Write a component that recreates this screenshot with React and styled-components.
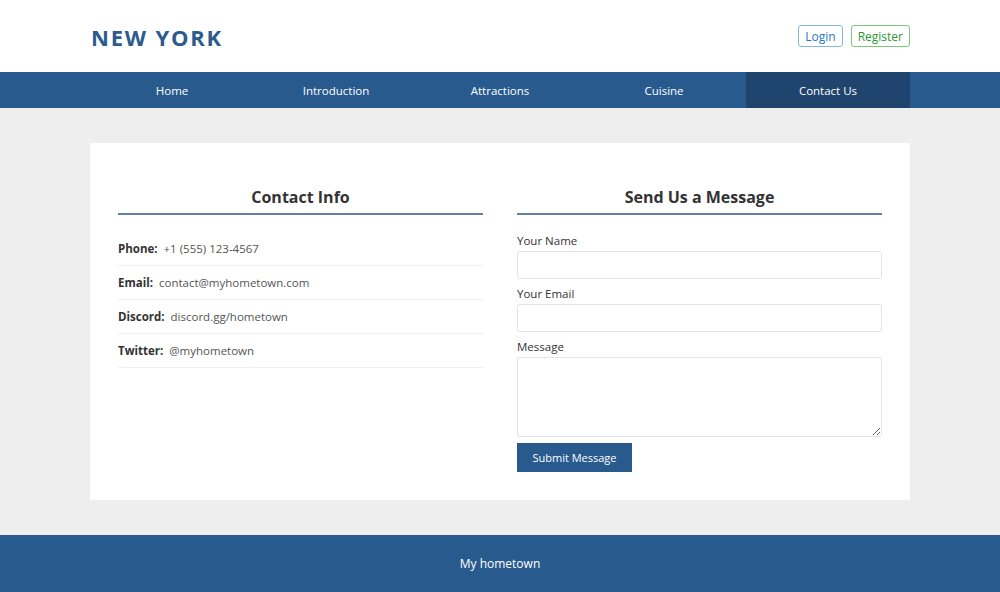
import React from 'react';
import styled, { createGlobalStyle } from 'styled-components';

const GlobalStyle = createGlobalStyle`
  html, body {
    margin: 0;
    padding: 0;
    background: #eeeeee;
    font-family: 'Open Sans', 'Noto Sans', sans-serif;
    color: #333;
  }
  * {
    box-sizing: border-box;
  }
`;

const Page = styled.div`
  display: flex;
  flex-direction: column;
  min-height: 592px;
`;

const Header = styled.header`
  background: #fff;
  height: 72px;
`;

const Container = styled.div`
  width: 820px;
  margin: 0 auto;
`;

const HeaderInner = styled(Container)`
  height: 100%;
  display: flex;
  align-items: center;
  justify-content: space-between;
`;

const Brand = styled.h1`
  margin: 1px 0 0 1px;
  font-size: 22px;
  font-weight: 700;
  letter-spacing: 1.8px;
  color: #2b5b8f;
`;

const AuthLinks = styled.div`
  display: flex;
  gap: 8px;
`;

const AuthButton = styled.a`
  display: inline-flex;
  align-items: center;
  justify-content: center;
  height: 22px;
  padding: 0 6px;
  border: 1px solid ${(p) => (p.$variant === 'green' ? '#78c878' : '#86b7e2')};
  border-radius: 3px;
  color: ${(p) => (p.$variant === 'green' ? '#2a9a34' : '#2479c2')};
  font-size: 12px;
  text-decoration: none;
  cursor: pointer;
`;

const Nav = styled.nav`
  background: #285a8e;
  height: 36px;
`;

const NavList = styled(Container)`
  display: grid;
  grid-template-columns: repeat(5, 1fr);
  height: 100%;
`;

const NavItem = styled.a`
  display: flex;
  align-items: center;
  justify-content: center;
  color: #fff;
  font-size: 11.5px;
  text-decoration: none;
  background: ${(p) => (p.$active ? '#1f446d' : 'transparent')};
`;

const Main = styled.main`
  flex: 1;
  padding: 35px 0;
`;

const Card = styled(Container)`
  background: #fff;
  padding: 42px 28px 28px;
  display: grid;
  grid-template-columns: 1fr 1fr;
  column-gap: 34px;
`;

const Column = styled.section``;

const SectionTitle = styled.h2`
  margin: 0 0 17px;
  padding-bottom: 4px;
  border-bottom: 2px solid #5f81a5;
  font-size: 16px;
  line-height: 24px;
  font-weight: 700;
  text-align: center;
  color: #333;
`;

const InfoRow = styled.div`
  height: 34px;
  display: flex;
  align-items: center;
  gap: 6px;
  border-bottom: 1px solid #f0f0f0;
  font-size: 11.5px;
  color: #555;
`;

const InfoLabel = styled.strong`
  color: #333;
  font-weight: 700;
`;

const Form = styled.form`
  display: flex;
  flex-direction: column;
  gap: 6px;
`;

const Field = styled.div`
  display: flex;
  flex-direction: column;
  gap: 2px;
`;

const Label = styled.label`
  font-size: 11.5px;
  line-height: 17px;
  color: #333;
`;

const Input = styled.input`
  height: 28px;
  border: 1px solid #e4e4e4;
  border-radius: 2px;
  padding: 4px 8px;
  font: inherit;
  outline: none;
`;

const TextArea = styled.textarea`
  height: 80px;
  border: 1px solid #e4e4e4;
  border-radius: 2px;
  padding: 4px 8px;
  font: inherit;
  outline: none;
  resize: vertical;
`;

const SubmitButton = styled.button`
  align-self: flex-start;
  height: 29px;
  width: 115px;
  border: none;
  background: #285a8e;
  color: #fff;
  font-family: inherit;
  font-size: 11px;
  cursor: pointer;
`;

const Footer = styled.footer`
  background: #285a8e;
  height: 57px;
  display: flex;
  align-items: center;
  justify-content: center;
  color: #fff;
  font-size: 12px;
`;

const navLinks = ['Home', 'Introduction', 'Attractions', 'Cuisine', 'Contact Us'];

const contacts = [
  { label: 'Phone:', value: '+1 (555) 123-4567' },
  { label: 'Email:', value: 'contact@myhometown.com' },
  { label: 'Discord:', value: 'discord.gg/hometown' },
  { label: 'Twitter:', value: '@myhometown' },
];

const App = () => {
  return (
    <Page>
      <GlobalStyle />
      <Header>
        <HeaderInner>
          <Brand>NEW YORK</Brand>
          <AuthLinks>
            <AuthButton>Login</AuthButton>
            <AuthButton $variant="green">Register</AuthButton>
          </AuthLinks>
        </HeaderInner>
      </Header>
      <Nav>
        <NavList>
          {navLinks.map((link) => (
            <NavItem key={link} $active={link === 'Contact Us'}>
              {link}
            </NavItem>
          ))}
        </NavList>
      </Nav>
      <Main>
        <Card>
          <Column>
            <SectionTitle>Contact Info</SectionTitle>
            {contacts.map((c) => (
              <InfoRow key={c.label}>
                <InfoLabel>{c.label}</InfoLabel>
                <span>{c.value}</span>
              </InfoRow>
            ))}
          </Column>
          <Column>
            <SectionTitle>Send Us a Message</SectionTitle>
            <Form onSubmit={(e) => e.preventDefault()}>
              <Field>
                <Label>Your Name</Label>
                <Input type="text" />
              </Field>
              <Field>
                <Label>Your Email</Label>
                <Input type="email" />
              </Field>
              <Field>
                <Label>Message</Label>
                <TextArea />
              </Field>
              <SubmitButton type="submit">Submit Message</SubmitButton>
            </Form>
          </Column>
        </Card>
      </Main>
      <Footer>My hometown</Footer>
    </Page>
  );
};

export default App;
